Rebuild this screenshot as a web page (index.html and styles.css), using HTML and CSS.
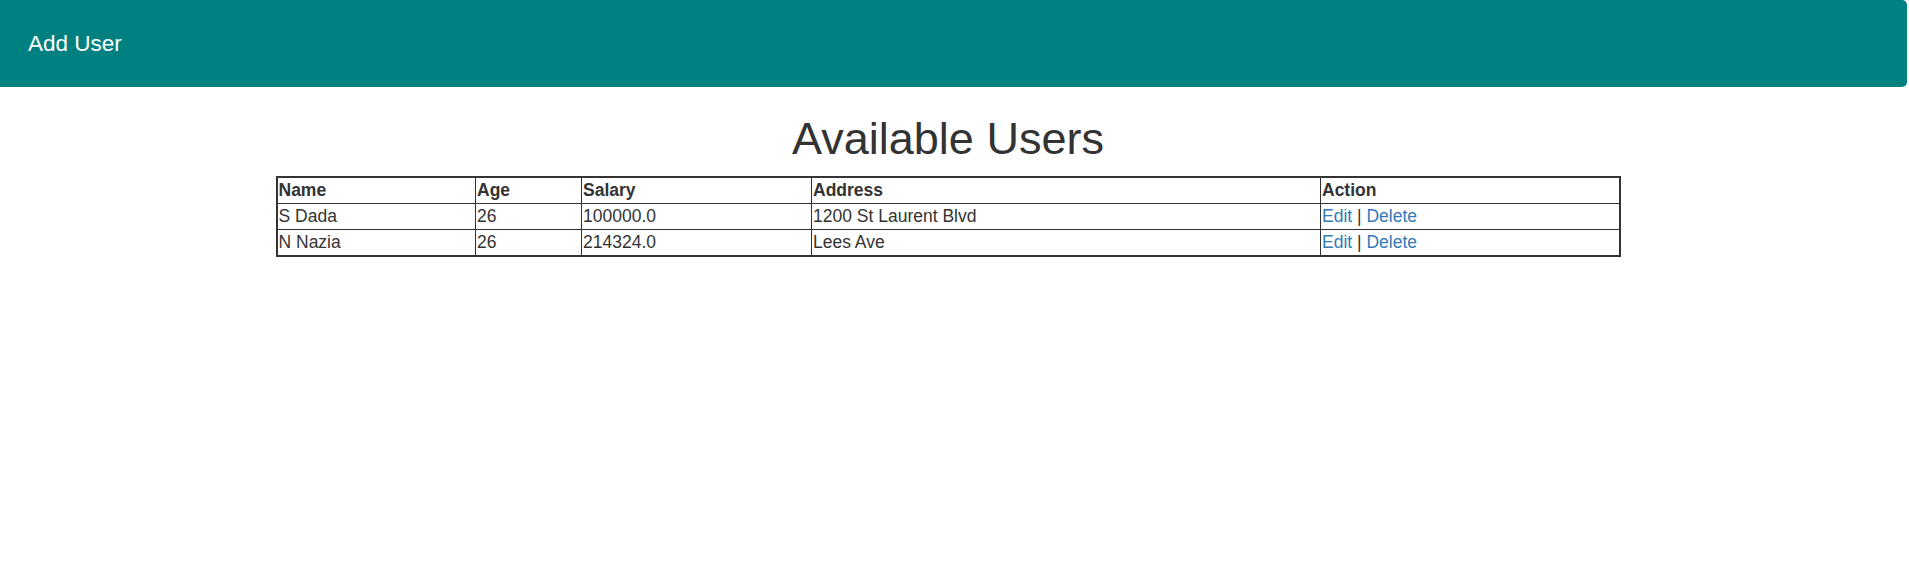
FILE: index.html
```html
<!DOCTYPE html>
<html lang="en">
<head>
<meta charset="utf-8">
<title>Available Users</title>
<link rel="stylesheet" href="styles.css">
</head>
<body>
<nav class="navbar">
  <a class="brand" href="#">Add User</a>
</nav>
<main class="main">
  <h1 class="title">Available Users</h1>
  <table class="users">
    <colgroup>
      <col class="c-name">
      <col class="c-age">
      <col class="c-salary">
      <col class="c-address">
      <col class="c-action">
    </colgroup>
    <thead>
      <tr><th>Name</th><th>Age</th><th>Salary</th><th>Address</th><th>Action</th></tr>
    </thead>
    <tbody>
      <tr><td>S Dada</td><td>26</td><td>100000.0</td><td>1200 St Laurent Blvd</td><td><a href="#">Edit</a> | <a href="#">Delete</a></td></tr>
      <tr><td>N Nazia</td><td>26</td><td>214324.0</td><td>Lees Ave</td><td><a href="#">Edit</a> | <a href="#">Delete</a></td></tr>
    </tbody>
  </table>
</main>
</body>
</html>
```
FILE: styles.css
```css
html, body {
  margin: 0;
  padding: 0;
  background: #ffffff;
  font-family: "Liberation Sans", Arial, sans-serif;
  color: #333333;
}

.navbar {
  background: #008080;
  margin-right: 2px;
  height: 87px;
  box-sizing: border-box;
  padding: 31px 0 0 28px;
  border-radius: 0 5px 5px 0;
}

.brand {
  color: #ffffff;
  text-decoration: none;
  font-size: 22.5px;
  line-height: 25px;
}

.main {
  width: 1896px;
  padding-top: 28px;
}

.title {
  margin: 0 0 13px 0;
  text-align: center;
  font-weight: normal;
  font-size: 45px;
  line-height: 48px;
  color: #333333;
}

.users {
  margin: 0 auto;
  width: 1343px;
  table-layout: fixed;
  border-collapse: collapse;
  border: 2px solid #333333;
  font-size: 17.5px;
  line-height: 25px;
}

.users th,
.users td {
  border: 1px solid #333333;
  padding: 0 1px;
  text-align: left;
  vertical-align: top;
  white-space: nowrap;
}

.users th {
  font-weight: bold;
}

.c-name { width: 199px; }
.c-age { width: 106px; }
.c-salary { width: 230px; }
.c-address { width: 509px; }
.c-action { width: 299px; }

.users a {
  color: #337ab7;
  text-decoration: none;
}
```
